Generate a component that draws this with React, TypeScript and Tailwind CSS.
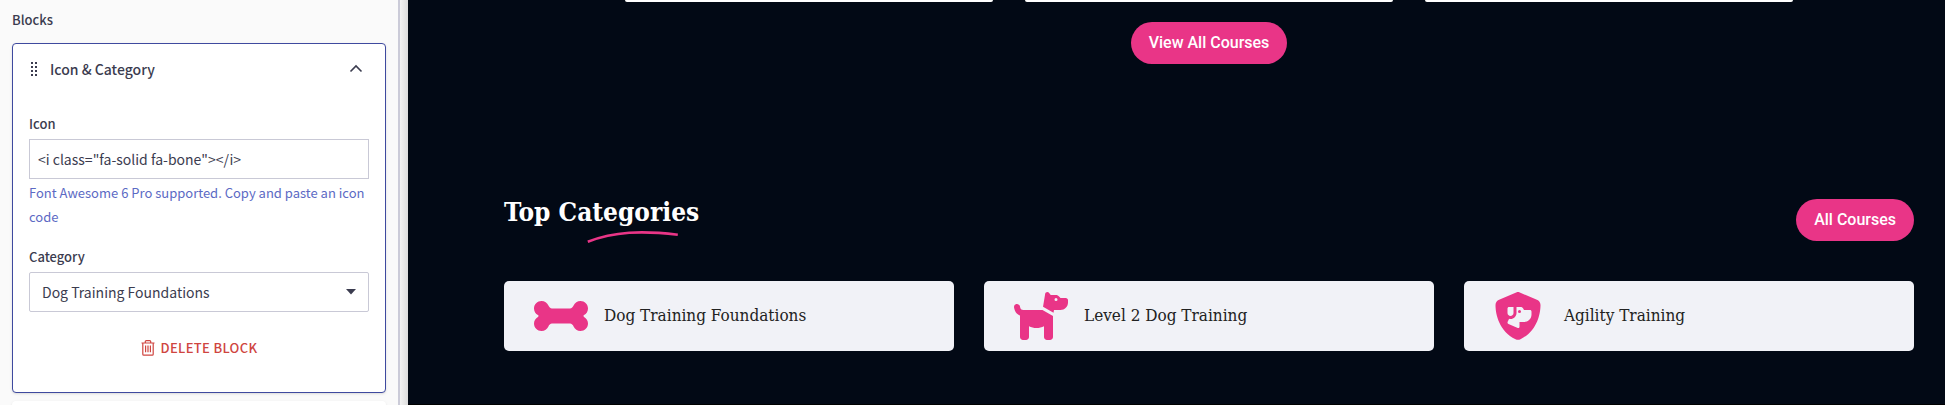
import { useState } from "react";
import type { ReactNode } from "react";
import { FaBone, FaDog, FaShieldDog } from "react-icons/fa6";

function DragHandle() {
  return (
    <svg width="7" height="15" viewBox="0 0 7 15" fill="#3b3c4f" aria-hidden="true">
      {[0, 4, 8, 12].map((y) => (
        <g key={y}>
          <rect x="0" y={y} width="2" height="2" />
          <rect x="4" y={y} width="2" height="2" />
        </g>
      ))}
    </svg>
  );
}

function TrashIcon() {
  return (
    <svg width="14" height="16" viewBox="0 0 14 16" fill="none" stroke="#cf4540" strokeWidth="1.2" aria-hidden="true">
      <path d="M0.5 3h13M4.3 3V1.6Q4.3 .6 5.3 .6H8.7Q9.7 .6 9.7 1.6V3M1.800 3V14.200q0 1 1 1h8.400q1 0 1-1V3" />
      <path d="M4.600 5.600v6.600M7 5.600v6.600M9.400 5.600v6.600" />
    </svg>
  );
}

function BlockEditor() {
  const [open, setOpen] = useState(true);
  const [code, setCode] = useState('<i class="fa-solid fa-bone"></i>');
  return (
    <section className="rounded border border-[#3f4a9f] bg-white px-4 shadow-sm">
      <button
        type="button"
        aria-expanded={open}
        onClick={() => setOpen(!open)}
        className="flex h-[50px] w-full items-center gap-3 pl-0.5 text-left"
      >
        <DragHandle />
        <span className="flex-1 text-sm font-medium">Icon &amp; Category</span>
        <svg className="mr-1.5" width="14" height="10" viewBox="0 0 14 10" fill="none" stroke="#3b3c4f" strokeWidth="1.6" aria-hidden="true">
          <path d="M1.5 7.5L7 2l5.500 5.500" />
        </svg>
      </button>
      {open && (
        <div className="pt-4">
          <label htmlFor="icon" className="block pt-1 pb-[5px] text-[13px] leading-5 font-medium">
            Icon
          </label>
          <input
            id="icon"
            value={code}
            onChange={(e) => setCode(e.target.value)}
            className="block h-10 w-full border border-[#c9c9d6] bg-white px-2 text-sm outline-none"
          />
          <p className="pt-0.5 text-[13px] leading-6 text-[#5c6ac4]">
            Font Awesome 6 Pro supported. Copy and paste an icon code
          </p>
          <label htmlFor="category" className="mt-3.5 block pt-1 pb-[5px] text-[13px] leading-5 font-medium">
            Category
          </label>
          <div className="relative">
            <select
              id="category"
              className="block h-10 w-full appearance-none rounded-xs border border-[#c9c9d6] bg-white px-3 text-sm outline-none"
            >
              <option>Dog Training Foundations</option>
              <option>Level 2 Dog Training</option>
              <option>Agility Training</option>
            </select>
            <svg className="pointer-events-none absolute top-[17px] right-[13px]" width="10" height="6" viewBox="0 0 10 6" fill="#3b3c4f" aria-hidden="true">
              <path d="M0 0h10L5 5.500z" />
            </svg>
          </div>
          <div className="flex justify-center pt-6 pb-8">
            <button type="button" className="flex h-6 items-center gap-1.5 text-[13px] font-medium tracking-wide text-[#cf4540]">
              <TrashIcon />
              DELETE BLOCK
            </button>
          </div>
        </div>
      )}
    </section>
  );
}

function PillLink({ children }: { children: ReactNode }) {
  return (
    <a
      href="#courses"
      className="inline-flex h-[42px] items-center rounded-full bg-[#e93587] px-[18px] font-['Roboto',sans-serif] text-base font-medium text-white"
    >
      {children}
    </a>
  );
}

const categories = [
  { name: "Dog Training Foundations", Icon: FaBone, size: "h-12 w-[54px]" },
  { name: "Level 2 Dog Training", Icon: FaDog, size: "h-12 w-[54px]" },
  { name: "Agility Training", Icon: FaShieldDog, size: "h-12 w-12" },
];

export default function App() {
  return (
    <div className="flex min-h-screen overflow-hidden">
      <aside className="flex max-h-screen w-[400px] shrink-0 flex-col overflow-hidden border-r-2 border-[#cbcbd8] bg-[#fafafa] pt-2 pr-3 pl-3 font-['Source_Sans_Pro','Noto_Sans_CJK_SC',sans-serif] text-[#3b3c4f]">
        <h2 className="pb-[11px] text-[13px] leading-6 font-medium">Blocks</h2>
        <BlockEditor />
        <section className="mt-2 h-14 shrink-0 rounded bg-white shadow-sm" />
      </aside>
      <div className="w-2 shrink-0 bg-linear-to-r from-[#f3f3f3] to-[#dcdcdc]" />
      <main className="min-w-0 flex-1 border-b border-black bg-[#020915] pr-[31px] pl-24">
        <div className="mx-auto grid max-w-[1168px] grid-cols-3 gap-8">
          <div className="h-0.5 rounded-b-sm bg-white" />
          <div className="h-0.5 rounded-b-sm bg-white" />
          <div className="h-0.5 rounded-b-sm bg-white" />
        </div>
        <div className="flex justify-center pt-5">
          <PillLink>View All Courses</PillLink>
        </div>
        <div className="flex items-start justify-between pt-[135px]">
          <h2 className="relative font-['Roboto_Slab','DejaVu_Serif_Condensed','DejaVu_Serif',serif] text-[26px] leading-[26px] font-bold text-white">
            Top Categories
            <svg className="absolute top-8 left-[83px]" width="92" height="12" viewBox="0 0 92 12" fill="none" stroke="#e93587" strokeWidth="2.600" aria-hidden="true">
              <path d="M.8 10.800C27 .5 55-.6 90.800 3.800" />
            </svg>
          </h2>
          <PillLink>All Courses</PillLink>
        </div>
        <ul className="grid grid-cols-3 gap-[30px] pt-10 pb-[53px]">
          {categories.map(({ name, Icon, size }) => (
            <li key={name}>
              <a href="#category" className="flex h-[70px] items-center gap-4 rounded-[5px] bg-[#f1f2f7] px-[30px]">
                <span className="flex w-[54px] text-[#e93587]">
                  <Icon className={size} aria-hidden="true" />
                </span>
                <span className="font-['Roboto_Slab','DejaVu_Serif_Condensed','DejaVu_Serif',serif] text-[17px] text-[#222]">
                  {name}
                </span>
              </a>
            </li>
          ))}
        </ul>
      </main>
    </div>
  );
}
